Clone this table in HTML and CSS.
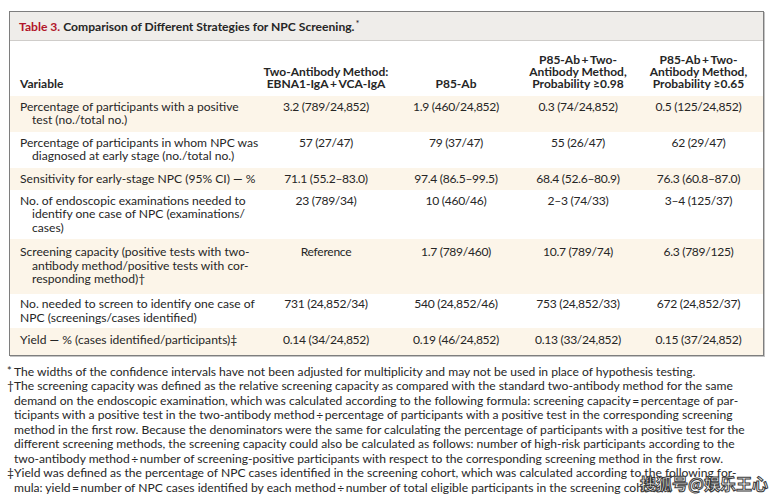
FILE: index.html
```html
<!DOCTYPE html>
<html lang="en">
<head>
<meta charset="utf-8">
<title>Table 3. Comparison of Different Strategies for NPC Screening</title>
<link rel="stylesheet" href="styles.css">
</head>
<body>
<div class="page">
  <section class="table-box">
    <h1 class="table-title"><span class="tnum">Table 3.</span> Comparison of Different Strategies for NPC Screening.<span class="star">*</span></h1>
    <table class="data">
      <colgroup>
        <col class="c-var"><col class="c-two"><col class="c-p85"><col class="c-p98"><col class="c-p65">
      </colgroup>
      <thead>
        <tr>
          <th class="var">Variable</th>
          <th>Two-Antibody Method:<br>EBNA1-IgA&thinsp;+&thinsp;VCA-IgA</th>
          <th>P85-Ab</th>
          <th>P85-Ab&thinsp;+&thinsp;Two-<br>Antibody Method,<br>Probability ≥0.98</th>
          <th>P85-Ab&thinsp;+&thinsp;Two-<br>Antibody Method,<br>Probability ≥0.65</th>
        </tr>
      </thead>
      <tbody>
        <tr class="alt">
          <td class="var">Percentage of participants with a positive<br>test (no./total no.)</td>
          <td>3.2 (789/24,852)</td><td>1.9 (460/24,852)</td><td>0.3 (74/24,852)</td><td>0.5 (125/24,852)</td>
        </tr>
        <tr>
          <td class="var">Percentage of participants in whom NPC was<br>diagnosed at early stage (no./total no.)</td>
          <td>57 (27/47)</td><td>79 (37/47)</td><td>55 (26/47)</td><td>62 (29/47)</td>
        </tr>
        <tr class="alt">
          <td class="var">Sensitivity for early-stage NPC (95% CI) — %</td>
          <td>71.1 (55.2–83.0)</td><td>97.4 (86.5–99.5)</td><td>68.4 (52.6–80.9)</td><td>76.3 (60.8–87.0)</td>
        </tr>
        <tr>
          <td class="var">No. of endoscopic examinations needed to<br>identify one case of NPC (examinations/<br>cases)</td>
          <td>23 (789/34)</td><td>10 (460/46)</td><td>2–3 (74/33)</td><td>3–4 (125/37)</td>
        </tr>
        <tr class="alt roomy">
          <td class="var">Screening capacity (positive tests with two-<br>antibody method/positive tests with cor-<br>responding method)†</td>
          <td>Reference</td><td>1.7 (789/460)</td><td>10.7 (789/74)</td><td>6.3 (789/125)</td>
        </tr>
        <tr class="snug">
          <td class="var flat">No. needed to screen to identify one case of<br>NPC (screenings/cases identified)</td>
          <td>731 (24,852/34)</td><td>540 (24,852/46)</td><td>753 (24,852/33)</td><td>672 (24,852/37)</td>
        </tr>
        <tr class="alt last">
          <td class="var">Yield — % (cases identified/participants)‡</td>
          <td>0.14 (34/24,852)</td><td>0.19 (46/24,852)</td><td>0.13 (33/24,852)</td><td>0.15 (37/24,852)</td>
        </tr>
      </tbody>
    </table>
  </section>

  <div class="notes">
    <p class="note"><span class="sym sym-star">*</span>The widths of the confidence intervals have not been adjusted for multiplicity and may not be used in place of hypothesis testing.</p>
    <p class="note"><span class="sym">†</span>The screening capacity was defined as the relative screening capacity as compared with the standard two-antibody method for the same<br>demand on the endoscopic examination, which was calculated according to the following formula: screening capacity&thinsp;=&thinsp;percentage of par-<br>ticipants with a positive test in the two-antibody method&thinsp;÷&thinsp;percentage of participants with a positive test in the corresponding screening<br>method in the first row. Because the denominators were the same for calculating the percentage of participants with a positive test for the<br>different screening methods, the screening capacity could also be calculated as follows: number of high-risk participants according to the<br>two-antibody method&thinsp;÷&thinsp;number of screening-positive participants with respect to the corresponding screening method in the first row.</p>
    <p class="note"><span class="sym">‡</span>Yield was defined as the percentage of NPC cases identified in the screening cohort, which was calculated according to the following for-<br>mula: yield&thinsp;=&thinsp;number of NPC cases identified by each method&thinsp;÷&thinsp;number of total eligible participants in the screening cohort.</p>
  </div>

  <div class="watermark">搜狐号@娱乐王心</div>
</div>
</body>
</html>
```

FILE: styles.css
```css
html, body {
  margin: 0;
  padding: 0;
  background: #ffffff;
}

body {
  font-family: Lato, "Open Sans", "Noto Sans CJK SC", sans-serif;
  color: #262626;
  width: 779px;
  height: 500px;
  overflow: hidden;
}

.page {
  position: relative;
  width: 779px;
  height: 500px;
  padding: 11px 0 0 9px;
  box-sizing: border-box;
}

.table-box {
  width: 755px;
  box-sizing: border-box;
  border: 1px solid #7e7e7e;
  box-shadow: 1px 1px 0 #c4c4c4;
  background: #ffffff;
}

.table-title {
  margin: 0;
  height: 29px;
  box-sizing: border-box;
  padding: 0 0 0 9px;
  display: flex;
  align-items: center;
  background: #efedea;
  border-bottom: 1px solid #cfcdca;
  font-size: 12.1px;
  font-weight: 700;
  color: #262626;
}

.table-title .tnum {
  color: #b2162a;
  margin-right: 3px;
}

.table-title .star {
  font-weight: 400;
  font-size: 9.5px;
  position: relative;
  top: -3px;
  margin-left: 1px;
}

.data {
  width: 753px;
  border-collapse: collapse;
  table-layout: fixed;
  font-size: 12.1px;
  line-height: 13.4px;
}

.c-var { width: 252px; }
.c-two { width: 128px; }
.c-p85 { width: 132px; }
.c-p98 { width: 112px; }
.c-p65 { width: 129px; }

.data th {
  font-weight: 700;
  font-size: 12px;
  line-height: 12px;
  text-align: center;
  vertical-align: bottom;
  padding: 0 0 6px;
  height: 49px;
  white-space: nowrap;
}

.data th.var {
  text-align: left;
  padding-left: 10px;
}

.data td {
  text-align: center;
  vertical-align: top;
  padding: 4px 0 5px;
  white-space: nowrap;
  letter-spacing: -0.3px;
}

.data tr.roomy td {
  padding-top: 6px;
  padding-bottom: 9px;
}

.data tr.snug td {
  padding-top: 3px;
  padding-bottom: 4px;
}

.data tr.last td {
  padding-top: 5px;
  padding-bottom: 8px;
}

.data td.var {
  text-align: left;
  padding-left: 22px;
  text-indent: -12px;
  letter-spacing: 0;
}

.data td.var.flat {
  padding-left: 10px;
  text-indent: 0;
}

.data tr.alt td {
  background: #fcf5e9;
}

.notes {
  margin-top: 9px;
  margin-left: -2px;
  font-size: 12.1px;
  line-height: 14.5px;
  color: #262626;
}

.note {
  margin: 0;
  padding-left: 7px;
  position: relative;
  white-space: nowrap;
}

.sym {
  position: absolute;
  left: 0;
  top: 0;
}

.sym-star {
  font-size: 11px;
  top: -1px;
}

.watermark {
  position: absolute;
  left: 640px;
  top: 472px;
  font-family: "Noto Sans CJK SC", sans-serif;
  font-weight: 700;
  font-size: 16px;
  line-height: 22px;
  color: #ffffff;
  -webkit-text-stroke: 1px #3a3a3a;
}
```
